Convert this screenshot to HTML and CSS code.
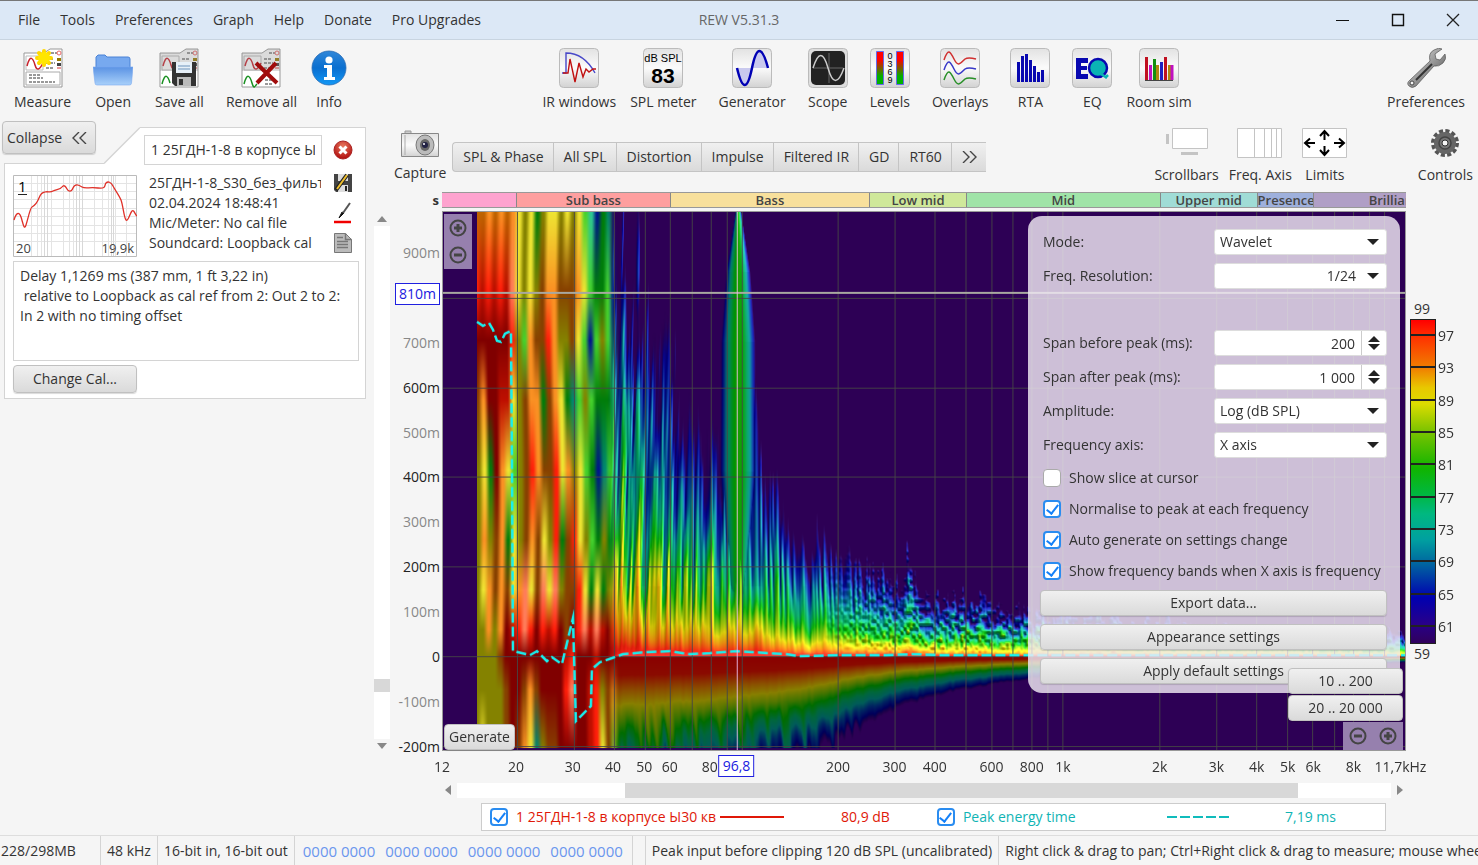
FILE: index.html
```html
<!DOCTYPE html>
<html lang="en">
<head>
    <meta charset="UTF-8">
    <meta name="viewport" content="width=device-width, initial-scale=1.0">
    <title>REW V5.31.3</title>
    <link rel="stylesheet" href="styles.css">
</head>
<body>
    <svg width="0" height="0" class="defs" aria-hidden="true">
        <defs>
            <linearGradient id="tile" x1="0" y1="0" x2="0" y2="1">
                <stop offset="0" stop-color="#e2e2e2"/><stop offset=".5" stop-color="#fbfbfb"/><stop offset="1" stop-color="#d2d2d2"/>
            </linearGradient>
            <linearGradient id="folder" x1="0" y1="0" x2="0" y2="1">
                <stop offset="0" stop-color="#5b93e4"/><stop offset="1" stop-color="#a8d0fa"/>
            </linearGradient>
            <linearGradient id="info" x1="0" y1="0" x2="0" y2="1">
                <stop offset="0" stop-color="#2f86d8"/><stop offset=".5" stop-color="#0a6fd0"/><stop offset="1" stop-color="#1398f5"/>
            </linearGradient>
            <linearGradient id="steel" x1="0" y1="0" x2="1" y2="1">
                <stop offset="0" stop-color="#f2f2f2"/><stop offset=".5" stop-color="#999"/><stop offset="1" stop-color="#444"/>
            </linearGradient>
            <linearGradient id="level" x1="0" y1="0" x2="0" y2="1">
                <stop offset=".25" stop-color="#f00"/><stop offset=".75" stop-color="#00b000"/>
            </linearGradient>
            <radialGradient id="redball" cx=".5" cy=".3" r=".7">
                <stop offset="0" stop-color="#e8795f"/><stop offset="1" stop-color="#b00c0c"/>
            </radialGradient>
            <symbol id="sheet" viewBox="0 0 40 40">
                <path d="M1 5h20l6-4h12v38H1z" fill="#fff" stroke="#999"/>
                <path d="M3 8h17v14H3z" fill="#fff" stroke="#bbb"/>
                <path d="M4 18c3-12 6-8 8-1s5 4 8-2" fill="none" stroke="#c8202a" stroke-width="1.5"/>
                <path d="M28 5h6M23 11h8M23 15h9M23 20h8" stroke="#333" stroke-dasharray="3 1"/>
                <circle cx="36" cy="5" r="2" fill="none" stroke="#e66"/>
                <path d="M34 10h4v3h-4z" fill="#987a00"/><path d="M34 15h4v3h-4z" fill="#444"/><path d="M34 20h4" stroke="#d33"/>
            </symbol>
        </defs>
    </svg>

    <header class="titlebar">
        <nav class="menu">
            <button>File</button>
            <button>Tools</button>
            <button>Preferences</button>
            <button>Graph</button>
            <button>Help</button>
            <button>Donate</button>
            <button>Pro Upgrades</button>
        </nav>
        <div class="window-title">REW V5.31.3</div>
        <div class="window-buttons">
            <button aria-label="Minimize"><svg width="14" height="14"><path d="M0 7.500h13" stroke="#111"/></svg></button>
            <button aria-label="Maximize"><svg width="14" height="14"><path d="M1.500 1.500h11v11h-11z" fill="none" stroke="#111" stroke-width="1.400"/></svg></button>
            <button aria-label="Close"><svg width="14" height="14"><path d="M1 1l12 12M13 1L1 13" stroke="#222" stroke-width="1.300"/></svg></button>
        </div>
    </header>

    <div class="toolbar">
        <div class="tool-group">
            <button class="tool">
                <svg width="40" height="40" viewBox="0 0 40 40">
                    <use href="#sheet"/>
                    <path d="M3 24h34v13H3z" fill="#fff" stroke="#aaa"/>
                    <path d="M6 27h11M6 30h14M6 34h26" stroke="#333" stroke-dasharray="3 1"/>
                    <g stroke="#ffd800" stroke-width="4" stroke-linecap="round"><path d="M21 3v14M14 10h14M16 5l10 10M26 5L16 15"/></g>
                    <circle cx="21" cy="10" r="6" fill="#ffe600"/>
                </svg>
                <span>Measure</span>
            </button>
            <button class="tool">
                <svg width="40" height="40" viewBox="0 0 40 40">
                    <path d="M3 20V9l2-2h7l2 2h21q2 0 2 2v10z" fill="#77a9ef" stroke="#4a82d6"/>
                    <path d="M0 19h40l-1.500 16q0 2-2 2H4q-2 0-2-2z" fill="url(#folder)" stroke="#7aaaf0" stroke-width=".6"/>
                </svg>
                <span>Open</span>
            </button>
            <button class="tool">
                <svg width="40" height="40" viewBox="0 0 40 40">
                    <use href="#sheet"/>
                    <path d="M1 5h20l6-4h12v22H1z" fill="#888" opacity=".3"/>
                    <path d="M3 36c3-12 6-8 8-1" fill="none" stroke="#189020" stroke-width="1.500"/>
                    <path d="M13 14h24v24H16l-3-3z" fill="#333"/>
                    <path d="M17 14h16v11H17z" fill="#e7f0f8"/>
                    <path d="M19 18h12M19 21h12" stroke="#6d93bb"/>
                    <path d="M18 29h14v9H18z" fill="#bbb"/><path d="M20 31h4v6h-4z" fill="#333"/>
                </svg>
                <span>Save all</span>
            </button>
            <button class="tool">
                <svg width="40" height="40" viewBox="0 0 40 40">
                    <use href="#sheet"/>
                    <path d="M1 5h20l6-4h12v22H1z" fill="#888" opacity=".3"/>
                    <path d="M3 36c3-12 6-8 8-1s3 3 5 1" fill="none" stroke="#189020" stroke-width="1.500"/>
                    <path d="M24 32h8M24 36h8" stroke="#333" stroke-dasharray="3 1"/>
                    <path d="M15 15l21 20M35 15L16 35" stroke="#a00c0c" stroke-width="4"/>
                </svg>
                <span>Remove all</span>
            </button>
            <button class="tool tool-near">
                <svg width="36" height="40" viewBox="0 0 36 40">
                    <circle cx="18" cy="20" r="17" fill="url(#info)" stroke="#2a6cb5" stroke-width=".8"/>
                    <circle cx="18" cy="12" r="3.600" fill="#fff"/>
                    <path d="M13 17h8v12h3v3H13v-3h3v-9h-3z" fill="#fff"/>
                </svg>
                <span>Info</span>
            </button>
        </div>

        <div class="tool-group">
            <button class="tool">
                <svg width="40" height="40" viewBox="0 0 40 40">
                    <rect x=".5" y=".5" width="39" height="39" rx="4" fill="url(#tile)" stroke="#bbb"/>
                    <path d="M3 25h4V5q18 0 29 20" fill="none" stroke="#4848c8" stroke-width="1.400"/>
                    <path d="M4 25h5l2-14 5 23 4-19 4 14 3-8 3 3 4-3h3" fill="none" stroke="#c01010" stroke-width="1.400"/>
                </svg>
                <span>IR windows</span>
            </button>
            <button class="tool tool-near">
                <svg width="40" height="40" viewBox="0 0 40 40">
                    <rect x=".5" y=".5" width="39" height="39" rx="4" fill="url(#tile)" stroke="#bbb"/>
                    <text x="20" y="14" class="spl-unit">dB SPL</text>
                    <text x="20" y="35" class="spl-value">83</text>
                </svg>
                <span>SPL meter</span>
            </button>
            <button class="tool">
                <svg width="40" height="40" viewBox="0 0 40 40">
                    <rect x=".5" y=".5" width="39" height="39" rx="4" fill="url(#tile)" stroke="#bbb"/>
                    <path d="M5 20q8 34 15 0zM20 20q8-34 15 0z" fill="#c9c9ee"/>
                    <path d="M5 20q8 34 15 0t16 0" fill="none" stroke="#0000b4" stroke-width="2.500"/>
                </svg>
                <span>Generator</span>
            </button>
            <button class="tool">
                <svg width="40" height="40" viewBox="0 0 40 40">
                    <rect x=".5" y=".5" width="39" height="39" rx="4" fill="#ddd" stroke="#bbb"/>
                    <rect x="3" y="3" width="34" height="34" rx="5" fill="#222"/>
                    <path d="M21 5v30M5 20h30" stroke="#666"/>
                    <path d="M5 20q8-25 15 0t16 0" fill="none" stroke="#ccc" stroke-width="1.500"/>
                </svg>
                <span>Scope</span>
            </button>
            <button class="tool">
                <svg width="40" height="40" viewBox="0 0 40 40">
                    <rect x=".5" y=".5" width="39" height="39" rx="4" fill="url(#tile)" stroke="#bbb"/>
                    <path d="M6.500 3.500h7v33h-7zM26.500 3.500h7v33h-7z" fill="url(#level)" stroke="#66e"/>
                    <g class="level-marks"><text x="20" y="11">0</text><text x="20" y="19">3</text><text x="20" y="27">6</text><text x="20" y="35">9</text></g>
                </svg>
                <span>Levels</span>
            </button>
            <button class="tool">
                <svg width="40" height="40" viewBox="0 0 40 40">
                    <rect x=".5" y=".5" width="39" height="39" rx="4" fill="url(#tile)" stroke="#bbb"/>
                    <g fill="none" stroke-width="1.500">
                        <path d="M4 12C8 0 10 3 14 11s6 5 11 0q3-2 11 0" stroke="#d03030"/>
                        <path d="M4 22c4-12 6-9 10-1s6 5 11 0q3-2 11 0" stroke="#3838c8"/>
                        <path d="M4 32c4-12 6-9 10-1s6 5 11 0q3-2 11 0" stroke="#289028"/>
                    </g>
                </svg>
                <span>Overlays</span>
            </button>
            <button class="tool">
                <svg width="40" height="40" viewBox="0 0 40 40">
                    <rect x=".5" y=".5" width="39" height="39" rx="4" fill="url(#tile)" stroke="#bbb"/>
                    <path d="M8.500 34V14M12.500 34V8M16.500 34V6M20.500 34V12M24.500 34V18M28.500 34V24M32.500 34V22" stroke="#0808b0" stroke-width="3"/>
                </svg>
                <span>RTA</span>
            </button>
            <button class="tool">
                <svg width="40" height="40" viewBox="0 0 40 40">
                    <rect x=".5" y=".5" width="39" height="39" rx="4" fill="url(#tile)" stroke="#bbb"/>
                    <path d="M4 10h12v5H9v3h6v4H9v4h7v5H4z" fill="#0808b0"/>
                    <circle cx="26" cy="20" r="9" fill="#0ab4b4" stroke="#0808b0" stroke-width="2.500"/>
                    <path d="M29 26l6 4M33 30l3-3" stroke="#0ab4b4" stroke-width="2.500"/>
                </svg>
                <span>EQ</span>
            </button>
            <button class="tool tool-near">
                <svg width="40" height="40" viewBox="0 0 40 40">
                    <rect x=".5" y=".5" width="39" height="39" rx="4" fill="url(#tile)" stroke="#bbb"/>
                    <g stroke-width="3">
                        <path d="M7.500 32V9" stroke="#c01020"/><path d="M11.500 32V17" stroke="#c010c0"/><path d="M15.500 32V11" stroke="#109010"/><path d="M18.500 32V17" stroke="#b08810"/>
                        <path d="M22.500 32V14" stroke="#2020c0"/><path d="M26.500 32V9" stroke="#c01020"/><path d="M30.500 32V17" stroke="#b08810"/><path d="M33 32V17" stroke="#c010c0"/>
                    </g>
                    <path d="M6 32.500h28" stroke="#444"/>
                </svg>
                <span>Room sim</span>
            </button>
        </div>

        <div class="tool-group">
            <button class="tool">
                <svg width="40" height="40" viewBox="0 0 40 40">
                    <path d="M4 32L24 13q-2-8 4-11 5-3 8-1l-7 5 1 5 4 1 5-6q2 5-2 9t-9 3L10 38q-4 3-7 0t1-6z" fill="url(#steel)" stroke="#555" stroke-width=".7"/>
                    <path d="M10 32l16-16" stroke="#333" stroke-width="2"/>
                    <circle cx="6" cy="35" r="2" fill="#f5f5f5" stroke="#444"/>
                </svg>
                <span>Preferences</span>
            </button>
        </div>
    </div>

    <main class="workspace">
        <aside class="measurements">
            <div class="tab-row">
                <div class="tab-left"><button class="button collapse">Collapse <svg width="15" height="12" viewBox="0 0 15 12"><path d="M7 0L1 6l6 6M14 0L8 6l6 6" fill="none" stroke="#444" stroke-width="1.400"/></svg></button></div>
                <svg class="tab-slope" width="36" height="37" viewBox="0 0 36 37"><path d="M0 36.500L36 .5V37H0z" fill="#fff"/><path d="M0 36.500L36 .5" stroke="#d4d4d4" stroke-width="1.400"/></svg>
                <div class="tab-head">
                    <input class="name" type="text" value="1 25ГДН-1-8 в корпусе Ы30" aria-label="Measurement name">
                    <button class="icon-button" aria-label="Remove">
                        <svg width="20" height="20" viewBox="0 0 20 20"><circle cx="10" cy="10" r="9" fill="url(#redball)" stroke="#a22"/><path d="M6.500 6.500l7 7M13.500 6.500l-7 7" stroke="#fff" stroke-width="3"/></svg>
                    </button>
                </div>
            </div>
            <div class="card">
                <div class="summary">
                    <svg class="thumb" width="124" height="82" viewBox="0 0 124 82">
                        <path d="M.5.5h123v81H.5z" fill="#fff" stroke="#bbb"/>
                        <path d="M1 8.500h122M1 16.500h122M1 24.500h122M1 33.500h122M1 41.500h122M1 50.500h122M1 58.500h122M1 66.500h122M18.500 1v80M24.500 1v80M28.500 1v80M38.500 1v80M50.500 1v80M56.500 1v80M60.500 1v80M81.500 1v80M89.500 1v80M95.500 1v80M102.500 1v80M113.500 1v80" stroke="#e4e4e4"/>
                        <path d="M31.500 1v80M34.500 1v80M63.500 1v80M66.500 1v80M69.500 1v80M98.500 1v80M100.500 1v80" stroke="#d8d8d8"/>
                        <path d="M1 45C3 38 6 36 8 42S11 56 13 50 17 33 19 32s5-4 7-9 3-5 6-6 5 1 8-1 7-1 9-4 4 0 5 2 4 4 6-1 6-3 9-1 7 0 16 1 6-3 8-5 5-1 7 3 6 9 8 14 3 18 5 20 4-7 6-9 3 4 5 5" fill="none" stroke="#e03028" stroke-width="1.300"/>
                        <text x="5" y="17">1</text><path d="M5 19.500h9" stroke="#222"/>
                        <text x="3" y="78" class="thumb-axis">20</text><text x="121" y="78" class="thumb-axis thumb-end">19,9k</text>
                    </svg>
                    <div class="details">
                        <div>25ГДН-1-8_S30_без_фильтра</div>
                        <div>02.04.2024 18:48:41</div>
                        <div>Mic/Meter: No cal file</div>
                        <div>Soundcard: Loopback cal</div>
                    </div>
                    <div class="card-icons">
                        <button class="icon-button" aria-label="Save"><svg width="20" height="20" viewBox="0 0 20 20"><path d="M1 1h18v18H3l-2-2z" fill="#444"/><path d="M5 1h10v7H5zM5 12h10v7H5z" fill="#ddd"/><path d="M12 13h2v5h-2z" fill="#222"/><path d="M3 17L14 2" stroke="#222" stroke-width="4"/><path d="M4 16L14 2" stroke="#f0c030" stroke-width="2"/></svg></button>
                        <button class="icon-button" aria-label="Trace colour"><svg width="20" height="22" viewBox="0 0 20 22"><path d="M6 16l3-6 2 1z" fill="#111" stroke="#111"/><path d="M10 11l7-10" stroke="#555" stroke-width="2"/><path d="M1 20h17" stroke="#f00000" stroke-width="2.500"/></svg></button>
                        <button class="icon-button" aria-label="Notes"><svg width="20" height="20" viewBox="0 0 20 20"><path d="M1.500.5h11l6 6v13h-17z" fill="#bbb" stroke="#777"/><path d="M12.500.5v6h6M4 4.500h6M4 8.500h11M4 11.500h11M4 14.500h11" fill="none" stroke="#777" stroke-width="1.500"/></svg></button>
                    </div>
                </div>
                <textarea class="notes" aria-label="Notes text">Delay 1,1269 ms (387 mm, 1 ft 3,22 in)
 relative to Loopback as cal ref from 2: Out 2 to 2: In 2 with no timing offset</textarea>
                <button class="button change-cal">Change Cal...</button>
            </div>
        </aside>

        <section class="graph">
            <div class="graph-bar">
                <button class="tool capture">
                    <svg width="40" height="32" viewBox="0 0 40 32">
                        <path d="M5 2h6v3H5z" fill="#ccc" stroke="#999"/><path d="M1.500 4.500h37v23h-37z" fill="url(#tile)" stroke="#888"/>
                        <path d="M5 6v20" stroke="#aaa"/><ellipse cx="25" cy="16" rx="9" ry="10" fill="#bbb" stroke="#777"/>
                        <ellipse cx="25" cy="16" rx="5" ry="6" fill="#666"/><circle cx="25" cy="16" r="3" fill="#224"/><circle cx="24" cy="15" r="1" fill="#fff"/>
                    </svg>
                    <span>Capture</span>
                </button>
                <div class="tabs">
                    <button>SPL &amp; Phase</button>
                    <button>All SPL</button>
                    <button>Distortion</button>
                    <button>Impulse</button>
                    <button>Filtered IR</button>
                    <button>GD</button>
                    <button>RT60</button>
                    <button aria-label="More graphs"><svg width="15" height="12" viewBox="0 0 15 12"><path d="M1 0l6 6-6 6M8 0l6 6-6 6" fill="none" stroke="#444" stroke-width="1.400"/></svg></button>
                </div>
                <div class="graph-tools">
                    <button class="tool">
                        <svg width="46" height="32" viewBox="0 0 46 32"><path d="M8.500 1.500h35v20h-35z" fill="#fff" stroke="#c4c4c4"/><path d="M2 7h3v10H2zM17 25h17v3H17z" fill="#c4c4c4"/></svg>
                        <span>Scrollbars</span>
                    </button>
                    <button class="tool">
                        <svg width="46" height="32" viewBox="0 0 46 32"><path d="M.5 1.500h44v29H.5zM17.500 2v28M27.500 2v28M34.500 2v28M39.500 2v28" fill="#fff" stroke="#c4c4c4"/></svg>
                        <span>Freq. Axis</span>
                    </button>
                    <button class="tool">
                        <svg width="46" height="32" viewBox="0 0 46 32"><path d="M.5 1.500h44v29H.5z" fill="#fff" stroke="#c4c4c4"/><path d="M22.500 13V5M18 9l4.500-5L27 9M22.500 19v8M18 23l4.500 5 4.500-5M13 16H4M8 11.500L3 16l5 4.500M32 16h9M37 11.500l5 4.500-5 4.500" fill="none" stroke="#000" stroke-width="2"/></svg>
                        <span>Limits</span>
                    </button>
                    <button class="tool controls-button">
                        <svg width="32" height="32" viewBox="0 0 32 32"><circle cx="16" cy="16" r="12" fill="none" stroke="#555" stroke-width="4" stroke-dasharray="4 2.280"/><circle cx="16" cy="16" r="11" fill="#666"/><circle cx="16" cy="16" r="6" fill="#777" stroke="#444" stroke-width="1.500"/><circle cx="16" cy="16" r="3" fill="#f5f5f5" stroke="#333"/></svg>
                        <span>Controls</span>
                    </button>
                </div>
            </div>

            <div class="chart">
                <div class="y-unit">s</div>
                <div class="bands" id="bands"></div>

                <div class="scroll scroll-y"><i class="arrow up"></i><div class="track"><div class="thumb-y"></div></div><i class="arrow down"></i></div>
                <div class="y-axis" id="y-axis"></div>
                <div class="plot">
                    <canvas id="heat" width="963" height="539"></canvas>
                    <div class="zoom zoom-y">
                        <button aria-label="Zoom in time"><svg width="20" height="20" viewBox="0 0 20 20"><circle cx="10" cy="10" r="7.500" fill="none" stroke="#444" stroke-width="2"/><path d="M10 6v8M6 10h8" stroke="#444" stroke-width="3"/></svg></button>
                        <button aria-label="Zoom out time"><svg width="20" height="20" viewBox="0 0 20 20"><circle cx="10" cy="10" r="7.500" fill="none" stroke="#444" stroke-width="2"/><path d="M6 10h8" stroke="#444" stroke-width="3"/></svg></button>
                    </div>
                    <button class="button generate">Generate</button>

                    <form class="panel">
                        <div class="field"><label for="mode">Mode:</label><div class="pick"><select id="mode"><option>Wavelet</option></select></div></div>
                        <div class="field"><label for="res">Freq. Resolution:</label><div class="pick pick-end"><select id="res"><option>1/24</option></select></div></div>
                        <div class="spacer"></div>
                        <div class="field"><label for="before">Span before peak (ms):</label><div class="spin"><input id="before" type="text" value="200"><div class="steps"><button type="button" class="step-up" aria-label="More before peak"></button><button type="button" class="step-down" aria-label="Less before peak"></button></div></div></div>
                        <div class="field"><label for="after">Span after peak (ms):</label><div class="spin"><input id="after" type="text" value="1 000"><div class="steps"><button type="button" class="step-up" aria-label="More after peak"></button><button type="button" class="step-down" aria-label="Less after peak"></button></div></div></div>
                        <div class="field"><label for="amp">Amplitude:</label><div class="pick"><select id="amp"><option>Log (dB SPL)</option></select></div></div>
                        <div class="field"><label for="faxis">Frequency axis:</label><div class="pick"><select id="faxis"><option>X axis</option></select></div></div>
                        <div class="checks">
                            <label><input type="checkbox">Show slice at cursor</label>
                            <label><input type="checkbox" checked>Normalise to peak at each frequency</label>
                            <label><input type="checkbox" checked>Auto generate on settings change</label>
                            <label><input type="checkbox" checked>Show frequency bands when X axis is frequency</label>
                        </div>
                        <button type="button" class="button">Export data...</button>
                        <button type="button" class="button">Appearance settings</button>
                        <button type="button" class="button">Apply default settings</button>
                    </form>

                    <div class="ranges">
                        <button class="button">10 .. 200</button>
                        <button class="button">20 .. 20 000</button>
                        <div class="zoom zoom-x">
                            <button aria-label="Zoom out frequency"><svg width="20" height="20" viewBox="0 0 20 20"><circle cx="10" cy="10" r="7.500" fill="none" stroke="#444" stroke-width="2"/><path d="M6 10h8" stroke="#444" stroke-width="3"/></svg></button>
                            <button aria-label="Zoom in frequency"><svg width="20" height="20" viewBox="0 0 20 20"><circle cx="10" cy="10" r="7.500" fill="none" stroke="#444" stroke-width="2"/><path d="M10 6v8M6 10h8" stroke="#444" stroke-width="3"/></svg></button>
                        </div>
                    </div>
                </div>
                <div class="scale">
                    <div>99</div>
                    <div class="scale-bar" id="scale"></div>
                    <div>59</div>
                </div>

                <div class="x-axis" id="x-axis"></div>
                <div class="scroll scroll-x"><i class="arrow left"></i><div class="track"><div class="thumb-x"></div></div><i class="arrow right"></i></div>
            </div>

            <div class="legend">
                <label class="trace trace-spl"><input type="checkbox" checked><span class="trace-name">1 25ГДН-1-8 в корпусе Ы30 кв</span></label>
                <svg width="64" height="4"><path d="M0 2h64" stroke="#e01808" stroke-width="2"/></svg>
                <span class="reading spl-reading">80,9 dB</span>
                <label class="trace trace-peak"><input type="checkbox" checked><span>Peak energy time</span></label>
                <svg width="62" height="4"><path d="M0 2h62" stroke="#10bcbc" stroke-width="2" stroke-dasharray="10 3"/></svg>
                <span class="reading peak-reading">7,19 ms</span>
            </div>
        </section>
    </main>

    <footer class="status">
        <div class="memory">228/298MB</div>
        <div>48 kHz</div>
        <div>16-bit in, 16-bit out</div>
        <div class="bits"><span>0000 0000</span><span>0000 0000</span><span>0000 0000</span><span>0000 0000</span></div>
        <div></div>
        <div>Peak input before clipping 120 dB SPL (uncalibrated)</div>
        <div class="hint">Right click &amp; drag to pan; Ctrl+Right click &amp; drag to measure; mouse wheel to zoom</div>
    </footer>

    <script src="graph.js"></script>
</body>
</html>
```
FILE: styles.css
```css
* {
    box-sizing: border-box;
}
body {
    margin: 0;
    min-height: 100vh;
    display: flex;
    flex-direction: column;
    background: #f5f5f5;
    color: #333;
    font: 14px/20px "Open Sans", "Noto Sans", sans-serif;
    overflow: hidden;
}
button, input, select, textarea {
    font: inherit;
    color: inherit;
    margin: 0;
}
button {
    padding: 0;
    border: 0;
    background: none;
    white-space: nowrap;
}
svg {
    display: block;
    flex: none;
}
.defs {
    position: absolute;
}

/* title bar */
.titlebar {
    display: grid;
    grid-template-columns: 1fr auto 1fr;
    align-items: center;
    height: 40px;
    background: #dce8f6;
    border-top: 1px solid #777;
    border-bottom: 1px solid #c8d4e0;
}
.menu {
    display: flex;
    gap: 20px;
    padding-left: 18px;
}
.window-title {
    color: #666;
}
.window-buttons {
    display: flex;
    justify-content: flex-end;
    gap: 41px;
    padding-right: 18px;
}

/* toolbar */
.toolbar {
    display: flex;
    justify-content: space-between;
    padding: 8px 13px 0 14px;
    height: 81px;
}
.tool-group {
    display: flex;
    gap: 22px;
    align-items: flex-start;
}
.tool {
    display: flex;
    flex-direction: column;
    align-items: center;
    gap: 4px;
}
.tool-near {
    margin-left: -8px;
}
.spl-unit {
    font: 11px "Liberation Sans", sans-serif;
    text-anchor: middle;
}
.spl-value {
    font: bold 21px "Liberation Sans", sans-serif;
    text-anchor: middle;
}
.level-marks {
    font: 9px "Liberation Sans", sans-serif;
    text-anchor: middle;
}

.button {
    height: 26px;
    border: 1px solid #c0c0c0;
    border-radius: 4px;
    background: linear-gradient(#f0f0f0, #dadada);
    box-shadow: 0 1px 1px rgba(0,0,0,.15);
}
.icon-button {
    display: block;
}

.workspace {
    flex: 1;
    display: flex;
}

/* measurement list */
.measurements {
    width: 366px;
    flex: none;
    padding-left: 4px;
}
.tab-row {
    display: flex;
    align-items: flex-end;
    height: 43px;
}
.tab-left {
    width: 100px;
    height: 43px;
    border-bottom: 1px solid #d4d4d4;
}
.collapse {
    display: flex;
    align-items: center;
    gap: 10px;
    height: 33px;
    padding: 0 8px 0 4px;
    margin-left: -2px;
}
.tab-head {
    flex: 1;
    display: flex;
    align-items: center;
    gap: 11px;
    height: 37px;
    padding: 7px 0 0 4px;
    background: #fff;
    border: solid #d4d4d4;
    border-width: 1px 1px 0 0;
}
.name {
    width: 178px;
    height: 30px;
    padding: 0 6px;
    border: 1px solid #d4d4d4;
    background: #fff;
}
.card {
    padding: 11px 6px 5px 8px;
    background: #fff;
    border: solid #d4d4d4;
    border-width: 0 1px 1px 1px;
}
.summary {
    display: flex;
    gap: 12px;
}
.thumb {
    font-size: 15px;
}
.thumb-axis {
    font-size: 13px;
    fill: #444;
}
.thumb-end {
    text-anchor: end;
}
.details {
    width: 172px;
    overflow: hidden;
    white-space: nowrap;
    margin-top: -2px;
}
.card-icons {
    display: flex;
    flex-direction: column;
    gap: 9px;
    margin-top: -2px;
}
.notes {
    display: block;
    width: 100%;
    height: 100px;
    margin: 4px 0;
    padding: 4px 6px;
    border: 1px solid #d4d4d4;
    resize: none;
    overflow: hidden;
}
.change-cal {
    width: 124px;
    height: 28px;
}

/* graph header */
.graph {
    flex: 1;
    min-width: 0;
    display: flex;
    flex-direction: column;
    padding-left: 8px;
}
.graph-bar {
    display: flex;
    align-items: flex-start;
    height: 71px;
    padding: 6px 5px 0 20px;
}
.capture {
    padding-top: 2px;
    gap: 2px;
}
.tabs {
    display: flex;
    height: 30px;
    margin: 15px 0 0 6px;
    border: 1px solid #c4c4c4;
    border-right: 0;
    border-radius: 4px 0 0 4px;
    background: linear-gradient(#f0f0f0, #dadada);
}
.tabs button {
    padding: 0 9px 0 10px;
    border-left: 1px solid #c4c4c4;
}
.tabs button:first-child {
    border-left: 0;
}
.graph-tools {
    display: flex;
    gap: 10px;
    margin-left: auto;
}
.graph-tools .tool {
    gap: 6px;
}
.controls-button {
    margin-left: 60px;
}

/* chart */
.chart {
    flex: 1;
    display: grid;
    grid-template-columns: 16px 52px 1fr 72px;
    grid-template-rows: 16px 1fr 31px 16px;
    grid-template-areas:
        ". unit bands ."
        "vscroll yaxis plot scale"
        ". . xaxis ."
        ". . hscroll .";
}
.y-unit {
    grid-area: unit;
    font-size: 13px;
    font-weight: bold;
    line-height: 16px;
    text-align: right;
    padding-right: 3px;
}
.bands {
    grid-area: bands;
    position: relative;
    overflow: hidden;
    background: #fea3cf;
    border: solid #999;
    border-width: 1px 0;
    font-size: 13px;
    font-weight: 600;
    line-height: 14px;
    color: #444;
}
.band {
    position: absolute;
    height: 100%;
    border-left: 1px solid #888;
    text-align: center;
    overflow: hidden;
}
.plot {
    grid-area: plot;
    position: relative;
    margin-top: 3px;
    border: 1px solid #999;
    background: #2d0055;
}
.plot canvas {
    position: absolute;
    width: 100%;
    height: 100%;
}
.y-axis {
    grid-area: yaxis;
    position: relative;
    margin-top: 4px;
}
.y-axis span {
    position: absolute;
    right: 2px;
    transform: translateY(-50%);
    color: #888;
}
.y-axis .major {
    color: #222;
}
.x-axis {
    grid-area: xaxis;
    position: relative;
}
.x-axis span {
    position: absolute;
    top: 6px;
    transform: translateX(-50%);
    white-space: nowrap;
}
.y-axis .cursor, .x-axis .cursor {
    padding: 0 3px;
    border: 1px solid #2020e0;
    background: #fff;
    color: #2020e0;
}
.x-axis .cursor {
    top: 4px;
}
.scroll {
    display: flex;
    align-items: center;
}
.scroll-y {
    grid-area: vscroll;
    flex-direction: column;
    padding: 8px 0 2px;
    gap: 4px;
}
.scroll-x {
    grid-area: hscroll;
    padding: 0 3px;
    gap: 6px;
}
.track {
    flex: 1;
    display: flex;
    background: #fff;
}
.scroll-y .track {
    width: 16px;
    flex-direction: column;
    justify-content: flex-end;
    padding-bottom: 47px;
}
.thumb-y {
    height: 13px;
    background: #d8d8d8;
}
.scroll-x .track {
    height: 15px;
}
.thumb-x {
    width: 72%;
    margin-left: 18%;
    background: #d8d8d8;
}
.arrow {
    border: 5px solid transparent;
}
.up {
    border-top: 0;
    border-bottom: 6px solid #888;
}
.down {
    border-bottom: 0;
    border-top: 6px solid #888;
}
.left {
    border-left: 0;
    border-right: 6px solid #888;
}
.right {
    border-right: 0;
    border-left: 6px solid #888;
}
.scale {
    grid-area: scale;
    padding: 91px 0 0 4px;
}
.scale > div {
    padding-left: 4px;
}
.scale-bar {
    position: relative;
    width: 26px;
    height: 325px;
    border: 1px solid #222;
    background: linear-gradient(#f00, #ff3000 5%, #f08000 15%, #e8c800 21%, #dcdc00 26%, #80c400 34%, #10b400 46%, #00b840 54%, #00b880 60%, #00a0a0 68%, #0060a0 76%, #0000b0 86%, #28008a 94%, #30005c);
}
.scale-bar span {
    position: absolute;
    left: 0;
    width: 24px;
    border-top: 2px solid #222;
    text-indent: 27px;
    line-height: 0;
    margin-top: -2px;
}

/* overlays on the plot */
.zoom {
    display: flex;
    width: max-content;
    background: #9680ae;
}
.zoom-y {
    position: absolute;
    left: 1px;
    top: 2px;
    flex-direction: column;
    gap: 7px;
    padding: 4px;
}
.zoom-x {
    gap: 10px;
    padding: 4px 5px;
    margin-left: auto;
}
.generate {
    position: absolute;
    left: 1px;
    bottom: 0;
    padding: 0 4px;
}
.panel {
    position: absolute;
    right: 5px;
    top: 4px;
    width: 372px;
    padding: 13px 13px 9px 12px;
    display: flex;
    flex-direction: column;
    gap: 8px;
    border-radius: 14px;
    background: rgba(240,233,244,.82);
}
.field {
    display: flex;
    justify-content: space-between;
    align-items: center;
    height: 26px;
    padding-left: 3px;
}
.spacer {
    height: 25px;
}
.pick, .spin {
    position: relative;
    width: 173px;
    height: 26px;
    background: #fff;
    border: 1px solid #ddd;
    border-radius: 3px;
}
.pick::after {
    content: "";
    position: absolute;
    right: 7px;
    top: 9px;
    border: 6px solid transparent;
    border-top-color: #222;
    border-bottom: 0;
    pointer-events: none;
}
.pick select {
    appearance: none;
    width: 100%;
    height: 24px;
    padding: 0 30px 0 5px;
    border: 0;
    background: none;
}
.pick-end select {
    text-align-last: right;
}
.spin {
    display: flex;
}
.spin input {
    width: 147px;
    height: 24px;
    padding: 0 6px;
    border: 0;
    border-right: 1px solid #ccc;
    background: none;
    text-align: right;
}
.steps {
    flex: 1;
    display: flex;
    flex-direction: column;
    justify-content: center;
    align-items: center;
    gap: 2px;
}
.steps button {
    border: 6px solid transparent;
}
.steps .step-up {
    border-top: 0;
    border-bottom-color: #222;
}
.steps .step-down {
    border-bottom: 0;
    border-top-color: #222;
}
.checks {
    display: flex;
    flex-direction: column;
    gap: 11px;
    padding: 2px 0 1px 3px;
}
.checks label {
    display: flex;
    align-items: center;
    gap: 8px;
    white-space: nowrap;
}
input[type=checkbox] {
    appearance: none;
    flex: none;
    display: grid;
    place-items: center;
    width: 18px;
    height: 18px;
    border: 1px solid #aaa;
    border-radius: 4px;
    background: #fff;
}
input[type=checkbox]:checked {
    border: 2px solid #2a8cf0;
}
input[type=checkbox]:checked::after {
    content: "";
    width: 5px;
    height: 10px;
    margin-bottom: 2px;
    border: solid #1480f8;
    border-width: 0 2px 2px 0;
    transform: rotate(38deg);
}
.ranges {
    position: absolute;
    right: 2px;
    bottom: 0;
    width: 115px;
    display: flex;
    flex-direction: column;
    gap: 1px;
}

/* legend */
.legend {
    display: flex;
    align-items: center;
    height: 28px;
    margin: 5px 92px 4px 107px;
    padding: 0 49px 0 8px;
    background: #fff;
    border: 1px solid #ccc;
}
.trace {
    display: flex;
    align-items: center;
    gap: 8px;
}
.trace-name {
    width: 200px;
    overflow: hidden;
    white-space: nowrap;
}
.trace-spl, .spl-reading {
    color: #e01808;
}
.trace-peak, .peak-reading {
    color: #10b4b4;
}
.trace-spl {
    margin-right: 4px;
}
.spl-reading {
    margin: 0 47px 0 57px;
}
.trace-peak {
    margin-right: auto;
}
.peak-reading {
    margin-left: 56px;
}

/* status bar */
.status {
    display: flex;
    height: 30px;
    border-top: 1px solid #ddd;
    line-height: 30px;
    white-space: nowrap;
    overflow: hidden;
}
.status div {
    flex: none;
    padding: 0 6px;
    border-right: 1px solid #d4d4d4;
}
.status .memory {
    width: 101px;
    padding-left: 1px;
}
.status .bits {
    display: flex;
    gap: 10px;
    padding: 0 9px 0 8px;
    font-size: 15px;
    color: #6a96ee;
}
.status .hint {
    flex: 1;
    border: 0;
}
```
FILE: graph.js
```js
// axis limits
const F_MIN = 11.77, F_MAX = 11650;
const T_MAX = 991, T_MIN = -209;

const fx = f => Math.log(f / F_MIN) / Math.log(F_MAX / F_MIN);
const ty = t => (T_MAX - t) / (T_MAX - T_MIN);

function add(parent, text, style, cls) {
    const el = document.createElement('span');
    el.textContent = text;
    el.className = cls || '';
    Object.assign(el.style, style);
    document.getElementById(parent).appendChild(el);
}

// frequency bands
[
    ['Sub bass', 20, 60, '#fe9f9f'], ['Bass', 60, 250, '#f8e09c'], ['Low mid', 250, 500, '#cfe89a'],
    ['Mid', 500, 2000, '#a0e4a8'], ['Upper mid', 2000, 4000, '#a0dcd6'], ['Presence', 4000, 6000, '#9eb0dc'],
    ['Brilliance', 6000, 20000, '#b09fc6']
].forEach(([name, lo, hi, color]) => {
    add('bands', name, { left: fx(lo) * 100 + '%', width: (fx(hi) - fx(lo)) * 100 + '%', background: color }, 'band');
});

for (let t = 900; t >= -200; t -= 100) {
    if (t !== 800) add('y-axis', t ? t + 'm' : '0', { top: ty(t) * 100 + '%' }, t % 200 ? '' : 'major');
}
add('y-axis', '810m', { top: ty(808) * 100 + '%' }, 'cursor');

[[11.77, '12'], [20, '20'], [30, '30'], [40, '40'], [50, '50'], [60, '60'], [80, '80'], [200, '200'], [300, '300'],
 [400, '400'], [600, '600'], [800, '800'], [1000, '1k'], [2000, '2k'], [3000, '3k'], [4000, '4k'], [5000, '5k'],
 [6000, '6k'], [8000, '8k'], [11200, '11,7kHz']].forEach(([f, label]) => add('x-axis', label, { left: fx(f) * 100 + '%' }));
add('x-axis', '96,8', { left: fx(96.8) * 100 + '%' }, 'cursor');

for (let v = 97; v >= 61; v -= 4) add('scale', v, { top: (99 - v) / 40 * 100 + '%' });

// wavelet spectrogram
const canvas = document.getElementById('heat');
const ctx = canvas.getContext('2d');
const W = canvas.width, H = canvas.height;
const ZERO = 445;
const clamp = (v, a, b) => Math.min(b, Math.max(a, v));

function hash(a, b) {
    const s = Math.sin(a * 127.1 + b * 311.7) * 43758.5453;
    return s - Math.floor(s);
}
function noise(x, y) {
    const i = Math.floor(x), j = Math.floor(y);
    let u = x - i, v = y - j;
    u = u * u * (3 - 2 * u);
    v = v * v * (3 - 2 * v);
    return (hash(i, j) * (1 - u) + hash(i + 1, j) * u) * (1 - v) + (hash(i, j + 1) * (1 - u) + hash(i + 1, j + 1) * u) * v;
}
function lerp(table, x) {
    for (let i = 1; i < table.length; i++) {
        if (x <= table[i][0]) {
            const k = clamp((x - table[i - 1][0]) / (table[i][0] - table[i - 1][0]), 0, 1);
            return table[i - 1].slice(1).map((v, n) => v + (table[i][n + 1] - v) * k);
        }
    }
    return table[table.length - 1].slice(1);
}

// drop below peak (0..1) to colour
const RAMP = [
    [0, 255, 0, 0], [.14, 255, 20, 0], [.25, 255, 150, 0], [.33, 250, 235, 0], [.42, 130, 215, 0], [.5, 0, 200, 0],
    [.6, 0, 190, 110], [.7, 0, 170, 165], [.8, 0, 70, 180], [.9, 0, 0, 170], [1, 45, 0, 85]
];
// decay length in pixels along the frequency axis
const DECAY = [
    [160, 460], [207, 330], [237, 270], [257, 240], [280, 215], [310, 205], [325, 150], [340, 120], [360, 95],
    [390, 82], [430, 72], [470, 66], [520, 58], [560, 50], [620, 42], [963, 22]
];
// rise length before the peak
const RISE = [
    [160, 170], [257, 150], [295, 138], [350, 115], [380, 96], [407, 74], [457, 50], [507, 36], [557, 27], [600, 21], [963, 6]
];
const PEAKS = [312, 339, 374, 382, 399, 424, 445, 464];
const RIDGE = [[0, 3], [60, 12], [130, 17], [260, 18], [360, 12], [445, 4]];

function drop(x, y) {
    if (y > ZERO) {
        const len = lerp(RISE, x)[0];
        const dy = y - ZERO;
        return Math.pow(dy / len, .9) + (noise(x / 4 - dy / 60, dy / 70) - .5) * .4 * clamp((dy - 45) / 50, 0, 1)
            + (noise(x / 3, 3) - .5) * .06 * dy / len;
    }
    const up = ZERO - y;
    let len = lerp(DECAY, x)[0] * (.78 + .3 * noise(x / 5, 1) + .2 * noise(x / 1.7, 7));
    let peak = 0;
    PEAKS.forEach(p => { peak = Math.max(peak, Math.exp(-Math.abs(x - p) / 4)); });
    len *= 1 + .45 * peak;
    let d = Math.pow(up / len, .52);
    // interference lines fan away from the 96,8 Hz resonance
    const bend = (x - 295) * (1 + up / 3000);
    d += (noise(bend / 2.4, up / 80) - .5) * .42 * clamp(up / 70, 0, 1) * clamp(2.2 - 1.8 * d, 0, 1);
    if (x > 380) d += (noise(x / 3, y / 4) - .45) * .5 * clamp((x - 380) / 120, 0, 1) * clamp(up / 25, 0, 1) * clamp(2.4 - 2 * d, 0, 1);
    const w = lerp(RIDGE, y)[0];
    const r = Math.abs(x - 295) / w;
    return Math.min(d, .48 + .5 * r * r);
}

// low frequency lobes, one letter per 6 px column
const INK = {
    R: [255, 30, 10], r: [190, 15, 0], D: [128, 0, 0], S: [255, 125, 90], O: [250, 145, 35], o: [190, 100, 0],
    Y: [238, 228, 50], V: [132, 130, 0], B: [135, 65, 0], L: [70, 210, 45], G: [0, 125, 10], T: [0, 135, 115],
    A: [45, 200, 150], N: [0, 20, 140], P: [45, 0, 85]
};
const LOBES = [
    [0, 'ooOoOoOYVYGVYYVYVYLANGTPP'],
    [78, 'RrRrRrSYVYVBOOBBBOYLGGLNP'],
    [128, 'DDDDDDRVLOBBROVVBYLNLVLTN'],
    [188, 'BODDrrYVBOOGBOYGTLVLGGGAT'],
    [258, 'VYGDOYLVBROBBRYOVYLGNTLAT'],
    [328, 'VOVBOGYVBOBYVRGBRYVLGVGLT'],
    [378, 'VYOBOBYOSYBSYSVBBRYGYGVYY'],
    [418, 'VVOVODrRSRDRrRDBDRSrSrDRR'],
    [445, 'VVVVBDDDDDDDDDDrRDDDrDDDD'],
    [478, 'VVVVVBDDBOBDDDDRSDDrRVBOB'],
    [539, 'VYVVVBDBOYTVBBDDDDDrRYBYG']
];
function lobes(x, y) {
    let j = 0;
    while (j < LOBES.length - 2 && y > LOBES[j + 1][0]) j++;
    const v = clamp((y - LOBES[j][0]) / (LOBES[j + 1][0] - LOBES[j][0]), 0, 1);
    const c = clamp((x - 34) / 6 + Math.sin(y / 60) * .2, 0, 23.99);
    const i = Math.floor(c);
    let u = c - i;
    u = u * u * (3 - 2 * u);
    const ink = (row, k) => INK[LOBES[row][1][k]];
    return [0, 1, 2].map(n =>
        (ink(j, i)[n] * (1 - u) + ink(j, i + 1)[n] * u) * (1 - v) + (ink(j + 1, i)[n] * (1 - u) + ink(j + 1, i + 1)[n] * u) * v);
}

const field = new Float32Array((W + 1) * (H + 1));
for (let y = 0; y <= H; y++) for (let x = 160; x <= W; x++) field[y * (W + 1) + x] = drop(x, y);

const img = ctx.createImageData(W, H);
for (let y = 0; y < H; y++) {
    for (let x = 0; x < W; x++) {
        let c = [45, 0, 85];
        if (x >= 34 && y < 537) {
            const m = clamp((x - 164) / 14, 0, 1);
            let hi = c;
            if (m > 0) {
                const k = y * (W + 1) + x;
                const d = field[k];
                if (d < 1) {
                    // lit from the upper right
                    const slope = (field[k + 1] - d) * 9 + (field[k] - field[k + W + 1]) * 40;
                    const s = y > ZERO ? -1 : clamp(slope, -1, 1);
                    hi = lerp(RAMP, clamp(d, 0, 1)).map(v => v * (.76 + .22 * s) + Math.max(0, s) * 45);
                    // fade the last few dB into the background
                    const f = clamp((1 - d) * 12, 0, 1);
                    hi = hi.map((v, n) => v * f + c[n] * (1 - f));
                }
            }
            if (m < 1) {
                const lo = lobes(x, y);
                c = lo.map((v, n) => v * (1 - m) + hi[n] * m);
            } else c = hi;
        }
        const p = (y * W + x) * 4;
        img.data[p] = c[0];
        img.data[p + 1] = c[1];
        img.data[p + 2] = c[2];
        img.data[p + 3] = 255;
    }
}
ctx.putImageData(img, 0, 0);

// grid
ctx.fillStyle = 'rgba(70,70,70,.9)';
[10, 100, 1000, 10000].forEach(dec => {
    for (let n = 1; n < 10; n++) ctx.fillRect(Math.round(fx(dec * n) * W), 0, 1, H);
});
for (let t = 800; t >= -200; t -= 200) ctx.fillRect(0, Math.round(ty(t) * H), W, 1);

// peak energy time
const PEAK_TIME = [
    34, 110, 40, 114, 46, 111, 50, 118, 54, 129, 58, 130, 62, 122, 68, 119, 69, 250, 70, 440, 75, 441, 87, 444, 94, 440,
    104, 450, 109, 446, 119, 453, 130, 407, 133, 510, 148, 495, 149, 458, 157, 451, 169, 447, 180, 443, 204, 441,
    227, 440, 247, 443, 267, 442, 294, 440, 310, 441, 344, 443, 357, 445, 397, 444, 444, 444, 470, 443, 500, 444, 963, 444
];
ctx.strokeStyle = '#18f0f0';
ctx.lineWidth = 2.5;
ctx.setLineDash([10, 4]);
ctx.beginPath();
for (let i = 0; i < PEAK_TIME.length; i += 2) ctx.lineTo(PEAK_TIME[i], PEAK_TIME[i + 1]);
ctx.stroke();

// cursor
ctx.fillStyle = '#a8a8a0';
ctx.fillRect(0, Math.round(ty(810) * H) - 1, W, 2);
ctx.fillStyle = 'rgba(235,190,235,.9)';
ctx.fillRect(Math.round(fx(96.8) * W), 0, 1, H);
```
